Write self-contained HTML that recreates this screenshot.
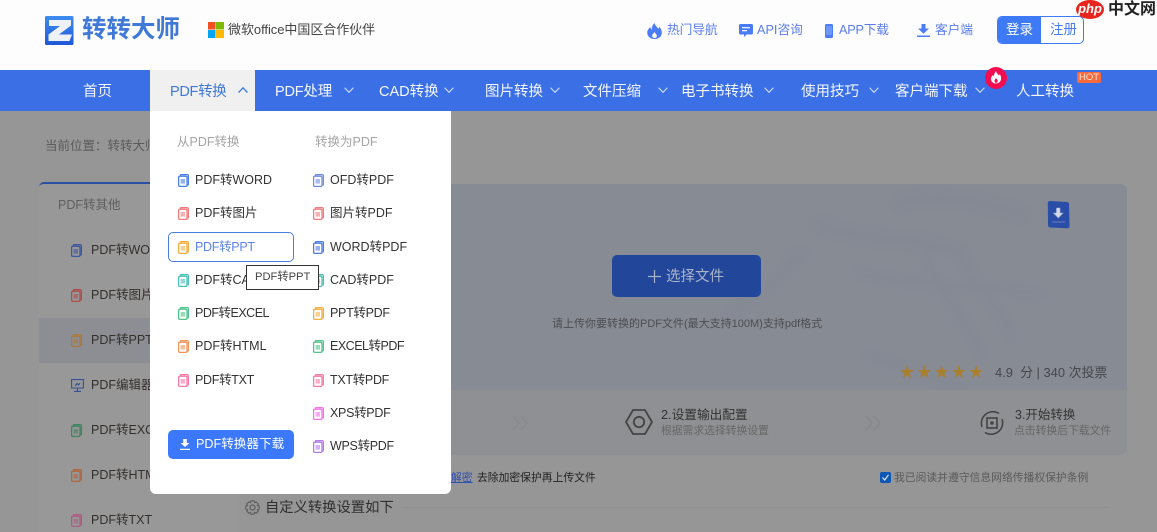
<!DOCTYPE html>
<html lang="zh-CN"><head><meta charset="utf-8"><title>PDF转PPT</title>
<style>
html,body{margin:0;padding:0}
body{width:1157px;height:532px;position:relative;overflow:hidden;background:#969696;font-family:"Liberation Sans","Noto Sans CJK SC",sans-serif;font-size:14px;color:#333}
.a,.t{position:absolute}
.t{white-space:nowrap;transform:translateY(-50%);line-height:20px}
svg{position:absolute;display:block;overflow:visible}
.n{color:#f4f7fe;font-size:14.5px;top:92px}
.c{width:10px;height:6px;fill:none;stroke:#cfdcf8;stroke-width:1.1}
.h{color:#5a7df0;font-size:12.7px;top:30px}
.f{width:11px;height:13px;fill:none}
.m{color:#34302e;font-size:12.5px}
.d{font-size:12.5px}
.x{letter-spacing:-.5px}
.y{letter-spacing:-.3px}
</style></head><body>
<svg width="0" height="0" style="position:absolute">
<symbol id="f" viewBox="0 0 11 13"><path d="M2.500 1.600V1.200Q2.500.6 3.100.6H9Q10.400.6 10.400 2V10.300Q10.400 11 9.800 11H9.300" fill="none" stroke="currentColor" stroke-width="1.300"/><rect x=".6" y="2.200" width="8.400" height="10.200" rx="1.400" fill="none" stroke="currentColor" stroke-width="1.300"/><rect x="2.600" y="5" width="4.400" height="4.600" fill="currentColor" opacity=".6"/></symbol>
</svg>

<!-- header -->
<div class="a" style="left:0;top:0;width:1157px;height:70px;background:#fdfdfd"></div>
<svg style="left:45px;top:16px" width="29" height="29" viewBox="0 0 29 29"><defs><linearGradient id="lg" x1="0" y1="0" x2="0" y2="1"><stop offset="0" stop-color="#3f8df0"/><stop offset="1" stop-color="#1f57d8"/></linearGradient></defs><rect width="28.500" height="29" rx="1.500" fill="url(#lg)"/><path d="M4 4H26V9.500L14 18.500H27L24.500 25H3.500V18.500L15 10H4Z" fill="#eef1f6"/></svg>
<div class="t" style="left:82px;top:30px;font-size:24.5px;font-weight:700;color:#3f78d6">转转大师</div>
<svg style="left:208px;top:22px" width="16" height="16"><rect width="7.500" height="7.500" fill="#f25022"/><rect x="8" width="8" height="7.500" fill="#7fba00"/><rect y="8" width="7.500" height="8" fill="#00a4ef"/><rect x="8" y="8" width="8" height="8" fill="#ffb900"/></svg>
<div class="t" style="left:228px;top:30px;font-size:13px;letter-spacing:-.05px;color:#444">微软office中国区合作伙伴</div>

<svg style="left:647px;top:23px" width="15" height="16" viewBox="0 0 16 18" preserveAspectRatio="none"><path d="M8 0C8.500 3 11 4.500 12 6.500C12.800 5.800 13 5 13 4C15 6.500 16 9 15.800 11.500C15.400 15.500 12 18 8 18C3.800 18 .6 15.200.3 11.500C0 8.500 2 6 3.500 4.500C3.700 6 4.200 7 5 7.500C5 4.500 6 2 8 0ZM8 10C7.500 11.500 5.500 12.500 5.500 14.500C5.500 16 6.600 17 8 17C9.500 17 10.500 16 10.500 14.500C10.500 12.800 8.800 11.800 8 10Z" fill="#4a7df5"/></svg>
<div class="t h" style="left:667px">热门导航</div>
<svg style="left:739px;top:24px" width="14" height="14" viewBox="0 0 14 14"><path d="M1.500 0H12.500Q14 0 14 1.500V9Q14 10.500 12.500 10.500H7.500L5 13V10.500H1.500Q0 10.500 0 9V1.500Q0 0 1.500 0Z" fill="#4a7df5"/><path d="M3 3.700H11M3 6.700H8" stroke="#fff" stroke-width="1.100"/></svg>
<div class="t h" style="left:757px">API咨询</div>
<svg style="left:825px;top:24px" width="8" height="14"><rect width="8" height="14" rx="1.500" fill="#4a7df5"/><rect x="1" y="2" width="6" height="9" fill="#6f97f7"/></svg>
<div class="t h" style="left:839px;letter-spacing:-.2px">APP下载</div>
<svg style="left:917px;top:24px" width="13" height="13" viewBox="0 0 13 13"><path d="M4.500 0H8.500V4.500H12L6.500 9.800 1 4.500H4.500ZM0 11.500H13V13H0Z" fill="#4a7df5"/></svg>
<div class="t h" style="left:935px">客户端</div>
<div class="a" style="left:997px;top:16px;width:87px;height:28px;box-sizing:border-box;border:1px solid #4079f5;border-radius:5px;background:#fff;overflow:hidden">
<div class="a" style="left:0;top:0;width:43px;height:27px;background:#3f7af6"></div></div>
<div class="t" style="left:1006px;top:30px;font-size:13.500px;color:#fff">登录</div>
<div class="t" style="left:1050px;top:30px;font-size:13.500px;color:#4a7df5">注册</div>
<!-- watermark -->
<svg style="left:1076px;top:0" width="81" height="28"><ellipse cx="14" cy="9.500" rx="14" ry="9.500" fill="#e8251d"/><text x="14" y="13" font-size="13" font-style="italic" font-weight="700" fill="#fff" text-anchor="middle" font-family="Liberation Sans">php</text></svg>
<div class="t" style="left:1108px;top:10px;font-size:16px;font-weight:700;color:#222">中文网</div>

<!-- nav -->
<div class="a" style="left:0;top:70px;width:1157px;height:41px;background:#3b6fe6"></div>
<div class="a" style="left:150px;top:70px;width:105px;height:41px;background:#f0f0f0"></div>
<div class="t n" style="left:83px">首页</div>
<div class="t n" style="left:170px;color:#3f78d8;letter-spacing:-.3px">PDF转换</div>
<svg class="c" style="left:238px;top:87px;stroke:#3f78d8;stroke-width:1.300"><path d="M.6 5.500 5 .8 9.400 5.500"/></svg>
<div class="t n" style="left:275px;letter-spacing:-.2px">PDF处理</div>
<svg class="c" style="left:344px;top:87px"><path d="M.6.8 5 5.300 9.400.8"/></svg>
<div class="t n" style="left:379px">CAD转换</div>
<svg class="c" style="left:444px;top:87px"><path d="M.6.8 5 5.300 9.400.8"/></svg>
<div class="t n" style="left:485px">图片转换</div>
<svg class="c" style="left:550px;top:87px"><path d="M.6.8 5 5.300 9.400.8"/></svg>
<div class="t n" style="left:583px">文件压缩</div>
<svg class="c" style="left:658px;top:87px"><path d="M.6.8 5 5.300 9.400.8"/></svg>
<div class="t n" style="left:681px">电子书转换</div>
<svg class="c" style="left:764px;top:87px"><path d="M.6.8 5 5.300 9.400.8"/></svg>
<div class="t n" style="left:801px">使用技巧</div>
<svg class="c" style="left:869px;top:87px"><path d="M.6.8 5 5.300 9.400.8"/></svg>
<div class="t n" style="left:895px">客户端下载</div>
<svg class="c" style="left:975px;top:87px"><path d="M.6.8 5 5.300 9.400.8"/></svg>
<div class="t n" style="left:1016px">人工转换</div>
<svg style="left:985px;top:67px" width="22" height="22" viewBox="0 0 22 22"><circle cx="11" cy="11" r="11" fill="#f30d50"/><path d="M11 4C11.300 6 13 7 14 8.500L14.800 7.300C16 9 16.300 10.500 16 12.300C15.500 15 13.500 16.500 11 16.500C8.300 16.500 6.300 14.800 6 12.500C5.800 10.500 7 9 8 8L8.700 9.500C9 7.500 9.700 5.500 11 4ZM11 11C10.500 12 9.500 12.800 9.500 14C9.500 15 10.200 15.700 11 15.700C12 15.700 12.700 15 12.700 14C12.700 12.800 11.500 12 11 11Z" fill="#fff"/></svg>
<div class="a" style="left:1077px;top:72px;width:24px;height:11px;background:#f96b3d;border-radius:2px;color:#ffe2d4;font-size:9.500px;line-height:11px;text-align:center">HOT</div>

<!-- dimmed page -->
<div class="t" style="left:45px;top:146px;font-size:12.500px;color:#5b5b5b">当前位置：转转大师</div>
<div class="a" style="left:39px;top:182px;width:200px;height:350px;background:#989898;border-top:2px solid #2c4ea3;border-radius:5px 0 0 0;box-sizing:border-box"></div>
<div class="a" style="left:39px;top:318px;width:200px;height:45px;background:#8c8e93"></div>
<div class="t" style="left:58px;top:205px;font-size:12.500px;color:#5f5f5f">PDF转其他</div>
<svg class="f" style="left:71px;top:244px;color:#3a57a0"><use href="#f"/></svg><div class="t m" style="left:91px;top:250px">PDF转WORD</div>
<svg class="f" style="left:71px;top:289px;color:#b14c4c"><use href="#f"/></svg><div class="t m" style="left:91px;top:295px">PDF转图片</div>
<svg class="f" style="left:71px;top:334px;color:#ad7a3a"><use href="#f"/></svg><div class="t m" style="left:91px;top:340px">PDF转PPT</div>
<svg style="left:71px;top:379px" width="13" height="13" viewBox="0 0 13 13"><path d="M.6.6H12.400V9H.6ZM6.500 9V12.400M3 12.400H10M4 7 6 4.500 7.500 6 9 4" fill="none" stroke="#34509a" stroke-width="1.100"/></svg><div class="t m" style="left:91px;top:385px">PDF编辑器</div>
<svg class="f" style="left:71px;top:424px;color:#3e8460"><use href="#f"/></svg><div class="t m" style="left:91px;top:430px">PDF转EXCEL</div>
<svg class="f" style="left:71px;top:469px;color:#b0663a"><use href="#f"/></svg><div class="t m" style="left:91px;top:475px">PDF转HTML</div>
<svg class="f" style="left:71px;top:514px;color:#ad5b80"><use href="#f"/></svg><div class="t m" style="left:91px;top:520px">PDF转TXT</div>

<!-- hero -->
<div class="a" style="left:240px;top:184px;width:887px;height:206px;background:#878b94;border-radius:6px 6px 0 0;overflow:hidden">
<svg style="left:0;top:0;filter:blur(4px)" width="887" height="206" fill="none" stroke="#7f8695" stroke-width="8" opacity=".4"><path d="M580 40C620 60 680 50 720 70C730 100 760 120 770 150M690 60C680 90 720 120 740 170M620 90C660 100 720 100 800 110M660 20C670 10 720 10 780 30M560 70C540 90 520 110 490 130M630 170C650 180 690 190 720 206" stroke-linecap="round"/></svg>
</div>
<div class="a" style="left:240px;top:390px;width:887px;height:65px;background:#8f9093;border-radius:0 0 8px 8px"></div>
<svg style="left:1047px;top:200px" width="23" height="30" viewBox="0 0 23 30"><path d="M3 1 20 2Q22 2.200 22 4L22.500 26Q22.500 28.500 20 28.300L3 27.500Q1 27.300 1 25L.8 3Q.8 1 3 1Z" fill="#2a4da8"/><path d="M9.500 8H13V13H16L11.300 18 6.500 13H9.500ZM5 22H18" fill="#d4dae8" stroke="#9fb0d8" stroke-width=".6"/></svg>
<div class="a" style="left:612px;top:255px;width:149px;height:42px;background:#22479a;border-radius:5px"></div>
<svg style="left:648px;top:270px" width="13" height="13"><path d="M6.500 0V13M0 6.500H13" stroke="#a8b2c8" stroke-width="1.200"/></svg>
<div class="t" style="left:666px;top:277px;font-size:14.500px;color:#aab4c8">选择文件</div>
<div class="t" style="left:552px;top:324px;font-size:11px;color:#4d4d50">请上传你要转换的PDF文件(最大支持100M)支持pdf格式</div>
<div class="t" style="left:899px;top:373px;font-size:18px;letter-spacing:1.100px;color:#a87f2f;font-family:'DejaVu Sans',sans-serif">★★★★★</div>
<div class="t" style="left:995px;top:373px;font-size:12.900px;color:#45474d">4.9&nbsp; 分 | 340 次投票</div>

<!-- steps -->
<svg style="left:512px;top:415px" width="17" height="16" fill="none" stroke="#85878a" stroke-width="1.200"><path d="M1 1 7 8 1 15M9 1 15 8 9 15"/></svg>
<svg style="left:865px;top:415px" width="17" height="16" fill="none" stroke="#85878a" stroke-width="1.200"><path d="M1 1 7 8 1 15M9 1 15 8 9 15"/></svg>
<svg style="left:625px;top:409px" width="28" height="26" viewBox="0 0 28 26" fill="none" stroke="#444" stroke-width="1.800"><path d="M8 1H20L27 13 20 25H8L1 13Z"/><circle cx="14" cy="13" r="5.200"/></svg>
<div class="t" style="left:661px;top:415px;font-size:12.700px;color:#333">2.设置输出配置</div>
<div class="t" style="left:661px;top:431px;font-size:10.800px;color:#666">根据需求选择转换设置</div>
<svg style="left:979px;top:410px" width="26" height="26" viewBox="0 0 26 26" fill="none" stroke="#444" stroke-width="1.600"><path d="M3 17A11.500 11.500 0 0 1 20 3.500M23 9A11.500 11.500 0 0 1 6 22.500"/><rect x="8" y="8" width="10" height="10"/><circle cx="13" cy="13" r="1" fill="#444"/></svg>
<div class="t" style="left:1015px;top:415px;font-size:12.500px;color:#333">3.开始转换</div>
<div class="t" style="left:1014px;top:431px;font-size:10.800px;color:#666">点击转换后下载文件</div>

<div class="t" style="left:451px;top:478px;font-size:10.800px;color:#2e4fb0;text-decoration:underline">解密</div>
<div class="t" style="left:477px;top:478px;font-size:10.800px;color:#222">去除加密保护再上传文件</div>
<svg style="left:880px;top:472px" width="11" height="11"><rect width="11" height="11" rx="2" fill="#0b57b5"/><path d="M2.500 5.500 4.700 8 8.500 2.800" fill="none" stroke="#e8e8e8" stroke-width="1.200"/></svg>
<div class="t" style="left:894px;top:478px;font-size:10.800px;color:#5a5a5a">我已阅读并遵守信息网络传播权保护条例</div>
<div class="a" style="left:403px;top:507px;width:705px;height:1px;background:#8f8f8f"></div>
<svg style="left:245px;top:500px" width="15" height="15" viewBox="0 0 15 15" fill="none" stroke="#5f5f5f" stroke-width="1.200"><path d="M6 .8H9L9.500 2.600 11.200 1.900 13.200 4 12.400 5.600 14.200 6.100V9L12.400 9.500 13.200 11.200 11.200 13.200 9.500 12.400 9 14.200H6L5.500 12.400 3.800 13.200 1.800 11.200 2.600 9.500.8 9V6.100L2.600 5.600 1.800 4 3.800 1.900 5.500 2.600Z"/><circle cx="7.500" cy="7.500" r="2.500"/></svg>
<div class="t" style="left:265px;top:508px;font-size:14.300px;color:#2f2f2f">自定义转换设置如下</div>

<!-- dropdown -->
<div class="a" style="left:150px;top:111px;width:301px;height:383px;background:#fff;border-radius:0 0 6px 6px"></div>
<div class="t" style="left:177px;top:142px;font-size:12.500px;color:#a5a5a5">从PDF转换</div>
<div class="t" style="left:315px;top:142px;font-size:12.500px;color:#a5a5a5">转换为PDF</div>
<div class="a" style="left:168px;top:232px;width:126px;height:30px;box-sizing:border-box;border:1px solid #4a7de0;border-radius:5px"></div>

<svg class="f" style="left:178px;top:174px;color:#4f7fe0"><use href="#f"/></svg><div class="t d" style="left:195px;top:180px">PDF转WORD</div>
<svg class="f" style="left:178px;top:207px;color:#f27c7c"><use href="#f"/></svg><div class="t d" style="left:195px;top:213px">PDF转图片</div>
<svg class="f" style="left:178px;top:241px;color:#f5ad42"><use href="#f"/></svg><div class="t d y" style="left:195px;top:247px;color:#5d84ea">PDF转PPT</div>
<svg class="f" style="left:178px;top:274px;color:#4cc0b8"><use href="#f"/></svg><div class="t d" style="left:195px;top:280px">PDF转CAD</div>
<svg class="f" style="left:178px;top:307px;color:#52c48c"><use href="#f"/></svg><div class="t d x" style="left:195px;top:313px">PDF转EXCEL</div>
<svg class="f" style="left:178px;top:340px;color:#f4935a"><use href="#f"/></svg><div class="t d" style="left:195px;top:346px">PDF转HTML</div>
<svg class="f" style="left:178px;top:374px;color:#f87aa8"><use href="#f"/></svg><div class="t d y" style="left:195px;top:380px">PDF转TXT</div>

<svg class="f" style="left:313px;top:174px;color:#6f8fe0"><use href="#f"/></svg><div class="t d" style="left:330px;top:180px">OFD转PDF</div>
<svg class="f" style="left:313px;top:207px;color:#f27c7c"><use href="#f"/></svg><div class="t d" style="left:330px;top:213px">图片转PDF</div>
<svg class="f" style="left:313px;top:241px;color:#4f7fe0"><use href="#f"/></svg><div class="t d" style="left:330px;top:247px">WORD转PDF</div>
<svg class="f" style="left:313px;top:274px;color:#4cc0b8"><use href="#f"/></svg><div class="t d" style="left:330px;top:280px">CAD转PDF</div>
<svg class="f" style="left:313px;top:307px;color:#f5ad42"><use href="#f"/></svg><div class="t d y" style="left:330px;top:313px">PPT转PDF</div>
<svg class="f" style="left:313px;top:340px;color:#52c48c"><use href="#f"/></svg><div class="t d x" style="left:330px;top:346px">EXCEL转PDF</div>
<svg class="f" style="left:313px;top:374px;color:#f87aa8"><use href="#f"/></svg><div class="t d y" style="left:330px;top:380px">TXT转PDF</div>
<svg class="f" style="left:313px;top:407px;color:#f472ec"><use href="#f"/></svg><div class="t d y" style="left:330px;top:413px">XPS转PDF</div>
<svg class="f" style="left:313px;top:440px;color:#b57be8"><use href="#f"/></svg><div class="t d y" style="left:330px;top:446px">WPS转PDF</div>

<div class="a" style="left:168px;top:430px;width:126px;height:29px;background:#3b78fb;border-radius:5px"></div>
<svg style="left:180px;top:439px" width="10" height="11" viewBox="0 0 10 11"><path d="M3.200 0H6.800V4H9.500L5 8 .5 4H3.200ZM0 9.700H10V11H0Z" fill="#fff"/></svg>
<div class="t" style="left:196px;top:444px;font-size:12.600px;color:#fff">PDF转换器下载</div>

<!-- tooltip -->
<div class="a" style="left:246px;top:265px;width:73px;height:25px;box-sizing:border-box;border:1px solid #333;background:#fff"></div>
<div class="t" style="left:255px;top:277px;font-size:11.200px;color:#444">PDF转PPT</div>
</body></html>
